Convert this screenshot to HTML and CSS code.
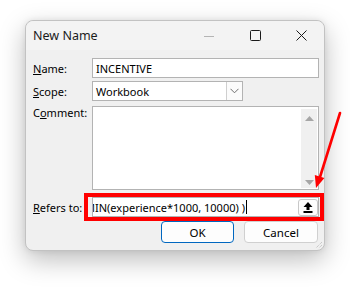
FILE: index.html
```html
<!DOCTYPE html>
<html>
<head>
<meta charset="utf-8">
<link rel="stylesheet" href="styles.css">
</head>
<body>
<div class="dialog">
  <div class="titlebar">
    <span class="title">New Name</span>
    <div class="controls">
      <span class="ctl"><svg width="10" height="10" viewBox="0 0 10 10"><line x1="0" y1="5.5" x2="10" y2="5.5" stroke="#b4b4b4" stroke-width="1"/></svg></span>
      <span class="ctl"><svg width="11" height="11" viewBox="0 0 11 11"><rect x="0.5" y="0.5" width="10" height="10" rx="1" fill="none" stroke="#1a1a1a" stroke-width="1"/></svg></span>
      <span class="ctl"><svg width="11" height="11" viewBox="0 0 11 11"><path d="M0.5 0.5 L10.5 10.5 M10.5 0.5 L0.5 10.5" stroke="#1a1a1a" stroke-width="1"/></svg></span>
    </div>
  </div>
  <div class="content">
    <div class="row r-name">
      <span class="lbl"><u>N</u>ame:</span>
      <div class="field wide">INCENTIVE</div>
    </div>
    <div class="row r-scope">
      <span class="lbl"><u>S</u>cope:</span>
      <div class="field combo">
        <span class="combo-text">Workbook</span>
        <span class="combo-btn"><svg width="9" height="6" viewBox="0 0 9 6"><path d="M0.5 0.8 L4.5 4.8 L8.5 0.8" fill="none" stroke="#6e6e6e" stroke-width="1"/></svg></span>
      </div>
    </div>
    <div class="row r-comment">
      <span class="lbl lbl-top">C<u>o</u>mment:</span>
      <div class="field memo">
        <div class="memo-text"></div>
        <div class="vscroll">
          <svg width="9" height="5" viewBox="0 0 9 5"><path d="M0 5 L4.5 0 L9 5 Z" fill="#a6a6a6"/></svg>
          <svg width="9" height="5" viewBox="0 0 9 5"><path d="M0 0 L4.5 5 L9 0 Z" fill="#a6a6a6"/></svg>
        </div>
      </div>
    </div>
    <div class="row r-refers">
      <span class="lbl"><u>R</u>efers to:</span>
      <div class="field wide refers">
        <div class="refers-clip"><span class="refers-text">MIN(experience*1000, 10000) )</span><span class="caret"></span></div>
        <span class="collapse-btn"><svg width="10" height="11" viewBox="0 0 10 11"><path d="M5 0 L9.5 5 L6.5 5 L6.5 8 L3.5 8 L3.5 5 L0.5 5 Z" fill="#000"/><rect x="0.5" y="9" width="9" height="2" fill="#000"/></svg></span>
      </div>
    </div>
    <div class="buttons">
      <button class="btn default">OK</button>
      <button class="btn">Cancel</button>
    </div>
  </div>
  <div class="highlight"></div>
  <svg class="grip" width="8" height="8" viewBox="0 0 8 8"><path d="M7 1 L1 7 M7 4 L4 7" stroke="#b8b8b8" stroke-width="1" stroke-dasharray="1 1"/></svg>
</div>
<svg class="arrow" width="350" height="296" viewBox="0 0 350 296">
  <line x1="340" y1="113" x2="320" y2="177" stroke="#ff0000" stroke-width="2.6" stroke-linecap="round"/>
  <path d="M316 188 L314.8 175 L324.4 178 Z" fill="#ff0000"/>
</svg>
</body>
</html>
```

FILE: styles.css
```css
* { box-sizing: border-box; }

body {
  margin: 0;
  width: 350px;
  height: 296px;
  overflow: hidden;
  position: relative;
  background: #ffffff;
  font-family: "Noto Sans", "Open Sans", sans-serif;
  font-size: 11px;
  color: #000;
}

.dialog {
  position: relative;
  margin: 20px 0 0 25px;
  width: 300px;
  height: 231px;
  border: 1px solid #c2c2c2;
  border-radius: 8px;
  background: #f0f0f0;
  box-shadow: 0 9px 26px rgba(0, 0, 0, 0.26), 0 0 6px rgba(0, 0, 0, 0.08);
}

.titlebar {
  height: 29px;
  display: flex;
  align-items: center;
  justify-content: space-between;
  padding-left: 7px;
  background: #f3f3f3;
  border-radius: 8px 8px 0 0;
}

.title {
  font-size: 12.5px;
  color: #1b1b1b;
}

.controls {
  display: flex;
  height: 29px;
}

.ctl {
  width: 46px;
  height: 29px;
  display: flex;
  align-items: center;
  justify-content: center;
}

.content {
  padding: 8px 5px 0 7px;
}

.row {
  display: flex;
  align-items: center;
}

.lbl {
  width: 59px;
  flex: none;
}

.lbl-top {
  align-self: flex-start;
  margin-top: -1px;
}

.r-name { margin-bottom: 3px; }
.r-scope { margin-bottom: 5px; }
.r-comment { margin-bottom: 7px; align-items: flex-start; }
.r-refers { margin-bottom: 4px; }

.field {
  height: 20px;
  border: 1px solid #b3b3b3;
  background: #fff;
  display: flex;
  align-items: center;
}

.wide {
  width: 227px;
  padding-left: 3px;
}

.combo {
  width: 151px;
  padding-left: 3px;
  justify-content: space-between;
}

.combo-btn {
  width: 16px;
  height: 18px;
  border-left: 1px solid #cfcfcf;
  background: #fbfbfb;
  display: flex;
  align-items: center;
  justify-content: center;
}

.memo {
  width: 227px;
  height: 84px;
  align-items: stretch;
}

.memo-text { flex: 1; }

.vscroll {
  width: 16px;
  margin: 2px 1px 1px 0;
  background: #f0f0f0;
  display: flex;
  flex-direction: column;
  align-items: center;
  justify-content: space-between;
  padding: 7px 0 3px;
}

.refers {
  padding-left: 0;
  padding-right: 0;
  justify-content: space-between;
}

.refers-clip {
  flex: 1;
  overflow: hidden;
  white-space: nowrap;
  display: flex;
  align-items: center;
  height: 18px;
}

.refers-text {
  margin-left: -8px;
}

.caret {
  display: inline-block;
  width: 1px;
  height: 14px;
  background: #000;
  margin-left: 1px;
}

.collapse-btn {
  width: 20px;
  height: 17px;
  border: 1px solid #c8c8c8;
  border-radius: 3px;
  background: #fdfdfd;
  display: flex;
  align-items: center;
  justify-content: center;
}

.buttons {
  display: flex;
  justify-content: flex-end;
  gap: 10px;
  padding-right: 1px;
}

.btn {
  width: 74px;
  height: 22px;
  border: 1px solid #d0d0d0;
  border-radius: 4px;
  background: #fdfdfd;
  font-family: inherit;
  font-size: 11.5px;
  color: #000;
  padding: 0;
}

.btn.default {
  border-color: #0067c0;
  width: 73px;
}

.highlight {
  position: absolute;
  left: 58px;
  top: 172px;
  width: 240px;
  height: 28px;
  border: 4px solid #ff0000;
}

.grip {
  position: absolute;
  right: 1px;
  bottom: 1px;
}

.arrow {
  position: absolute;
  left: 0;
  top: 0;
  pointer-events: none;
}
```
